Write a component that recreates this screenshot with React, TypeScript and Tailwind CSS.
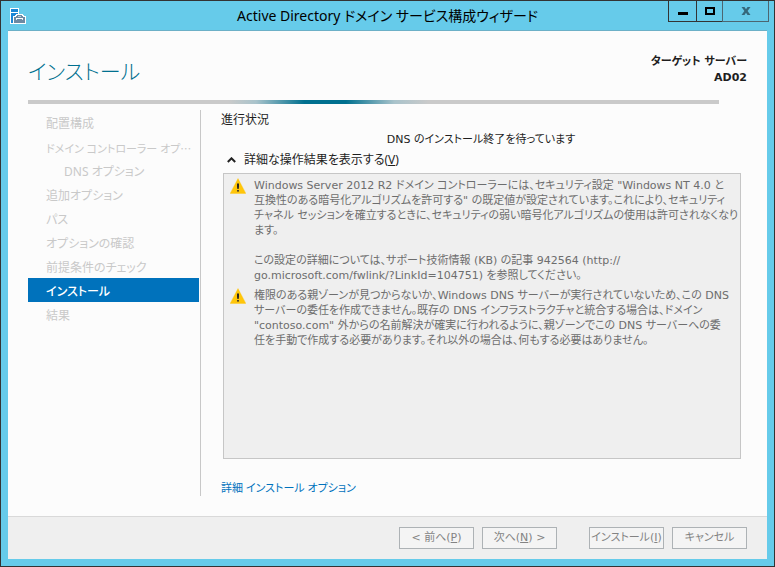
import type { ReactNode } from "react"

type Step = {
    id: string
    label: ReactNode
    nested?: boolean
    compact?: boolean
}

const steps: Step[] = [
    { id: "deployment", label: "配置構成" },
    {
        id: "dc-options",
        label: (
            <>
                ドメイン コントローラー オプ<span className="font-['Noto_Sans_CJK_JP',sans-serif]">…</span>
            </>
        ),
        compact: true,
    },
    { id: "dns", label: "DNS オプション", nested: true },
    { id: "additional", label: "追加オプション" },
    { id: "paths", label: "パス" },
    { id: "review", label: "オプションの確認" },
    { id: "prerequisites", label: "前提条件のチェック" },
    { id: "install", label: "インストール" },
    { id: "results", label: "結果" },
]

const currentStep = "install"

function AppIcon() {
    return (
        <svg width="16" height="16" viewBox="0 0 16 16" shapeRendering="crispEdges" aria-hidden="true">
            <path d="M0 0h9v6h4v1h1v1h2v8H0z" fill="#fff" />
            <rect x="1" y="1" width="7" height="3" fill="#1b87d6" />
            <path d="M1 5h7v1H6v1H5v1H3v7H1z" fill="#1b87d6" />
            <path d="M7 7h5v1h1v1h2v6H4V9h2V8h1z" fill="#6d8aa3" />
            <rect x="8" y="8" width="3" height="1" fill="#b9c9d6" />
            <rect x="6" y="10" width="7" height="1" fill="#fff" />
            <rect x="6" y="11" width="1" height="1" fill="#dfe7ed" />
            <rect x="12" y="11" width="1" height="1" fill="#dfe7ed" />
        </svg>
    )
}

function WarningIcon() {
    return (
        <svg width="16" height="16" viewBox="0 0 16 16" className="shrink-0" role="img" aria-label="警告">
            <path d="M8 0.6 15.8 15.4H0.2z" fill="#ffc60a" stroke="#ffc60a" strokeWidth="0.4" strokeLinejoin="round" />
            <path d="M7 5.500h2v3.500l-.4 2H7.4L7 9z" fill="#2b2620" />
            <rect x="7.200" y="12" width="1.600" height="1.600" fill="#2b2620" />
        </svg>
    )
}

function LogEntry({ children }: { children: ReactNode }) {
    return (
        <li className="flex items-start gap-2">
            <WarningIcon />
            <p className="whitespace-nowrap">{children}</p>
        </li>
    )
}

function WizardButton({ children }: { children: ReactNode }) {
    return (
        <button
            type="button"
            className="h-[22px] w-[75px] border border-[#adb2b5] bg-[#f4f4f4] text-center font-['DejaVu_Sans','Noto_Sans_CJK_JP',sans-serif] text-[11px] leading-5 whitespace-nowrap text-[#838383]"
        >
            {children}
        </button>
    )
}

export default function App() {
    return (
        <div
            lang="ja"
            className="flex min-h-screen flex-col border border-[#333] bg-[#66cbea] px-[7px] pb-[7px] font-['Noto_Sans','Noto_Sans_CJK_JP',sans-serif] text-xs text-[#1e1e1e] [font-feature-settings:'palt']"
        >
            {/* Title bar */}
            <header className="grid h-[29px] shrink-0 grid-cols-[1fr_auto_1fr] items-center">
                <div className="pl-0.5">
                    <AppIcon />
                </div>
                <h1 className="text-[14px] leading-6 whitespace-nowrap text-black">
                    Active Directory ドメイン サービス構成ウィザード
                </h1>
                <div className="-mr-0.5 flex self-start justify-self-end">
                    <button type="button" aria-label="最小化" className="flex h-[21px] w-7 items-center justify-center border-b border-l border-[#333]">
                        <svg width="10" height="10" viewBox="0 0 10 10" shapeRendering="crispEdges" aria-hidden="true">
                            <rect y="6" width="10" height="3" fill="#000" />
                        </svg>
                    </button>
                    <button type="button" aria-label="最大化" className="flex h-[21px] w-[26px] items-center justify-center border-b border-l border-[#333]">
                        <svg width="10" height="8" viewBox="0 0 10 8" shapeRendering="crispEdges" aria-hidden="true">
                            <rect x="1" y="1" width="8" height="6" fill="none" stroke="#000" strokeWidth="2" />
                        </svg>
                    </button>
                    <button type="button" aria-label="閉じる" className="flex h-[21px] w-[47px] items-center justify-center border-x border-b border-[#4c6671]">
                        <svg width="10" height="8" viewBox="0 0 10 8" aria-hidden="true">
                            <path d="M0.500 0h3L5 2.200 6.500 0h3L6.600 4 9.500 8h-3L5 5.800 3.500 8h-3l2.900-4z" fill="#35687b" />
                        </svg>
                    </button>
                </div>
            </header>

            <div className="flex flex-1 flex-col border-t border-[#6cb0c7] bg-[#fcfcfc]">
                <div className="flex h-[69px] shrink-0 items-start justify-between px-5 pt-5">
                    <h2 className="text-[21px] leading-10 font-light text-[#00708f]">インストール</h2>
                    <p className="pt-[3px] text-right font-['DejaVu_Sans','Noto_Sans_CJK_JP',sans-serif] text-[11px] leading-4 font-bold">
                        ターゲット サーバー
                        <br />
                        AD02
                    </p>
                </div>

                {/* Running progress marker */}
                <div
                    role="progressbar"
                    aria-label="進行状況"
                    className="mr-12 ml-5 h-1 shrink-0 bg-[linear-gradient(to_right,#cacaca_29%,#a9c3cb_33%,#00708f_40%,#00708f_46%,#a9c3cb_53%,#cacaca_58%)]"
                />

                <div className="flex flex-1 pt-1.5 pr-[26px] pb-5 pl-5">
                    <nav className="w-[173px] shrink-0 border-r border-[#c8c8c8] pr-px">
                        <ol>
                            {steps.map((step) => {
                                const active = step.id === currentStep
                                return (
                                    <li
                                        key={step.id}
                                        aria-current={active ? "step" : undefined}
                                        className={`h-6 pt-1 leading-5 whitespace-nowrap ${step.nested ? "pl-9" : "pl-[18px]"} ${
                                            step.compact ? "text-[11px]" : "text-xs"
                                        } ${active ? "bg-[#0072bc] font-medium text-white" : "text-[#c9c9c9]"}`}
                                    >
                                        {step.label}
                                    </li>
                                )
                            })}
                        </ol>
                    </nav>

                    <main className="flex min-w-0 flex-1 flex-col pl-5">
                        <h3 className="leading-5">進行状況</h3>
                        <p className="text-center font-['DejaVu_Sans','Noto_Sans_CJK_JP',sans-serif] text-[11px] leading-5">
                            DNS のインストール終了を待っています
                        </p>
                        <button type="button" aria-expanded="true" className="flex h-5 items-center gap-2 self-start pl-1.5">
                            <svg width="9" height="6" viewBox="0 0 9 6" aria-hidden="true">
                                <path d="M0.800 5 4.500 1.300 8.200 5" fill="none" stroke="#222" strokeWidth="2" />
                            </svg>
                            <span>
                                詳細な操作結果を表示する(<u>V</u>)
                            </span>
                        </button>

                        <ul className="mt-[3px] ml-0.5 flex flex-1 flex-col gap-[5px] border border-[#c6c6c6] bg-[#efefef] py-1 pl-1.5 font-['DejaVu_Sans','Noto_Sans_CJK_JP',sans-serif] text-[11px] leading-[15px] text-[#6d6d6d]">
                            <LogEntry>
                                Windows Server 2012 R2 ドメイン コントローラーには、セキュリティ設定 "Windows NT 4.0 と
                                <br />
                                互換性のある暗号化アルゴリズムを許可する" の既定値が設定されています。これにより、セキュリティ
                                <br />
                                チャネル セッションを確立するときに、セキュリティの弱い暗号化アルゴリズムの使用は許可されなくなり
                                <br />
                                ます。
                                <br />
                                <br />
                                この設定の詳細については、サポート技術情報 (KB) の記事 942564 (http://
                                <br />
                                go.microsoft.com/fwlink/?LinkId=104751) を参照してください。
                            </LogEntry>
                            <LogEntry>
                                権限のある親ゾーンが見つからないか、Windows DNS サーバーが実行されていないため、この DNS
                                <br />
                                サーバーの委任を作成できません。既存の DNS インフラストラクチャと統合する場合は、ドメイン
                                <br />
                                "contoso.com" 外からの名前解決が確実に行われるように、親ゾーンでこの DNS サーバーへの委
                                <br />
                                任を手動で作成する必要があります。それ以外の場合は、何もする必要はありません。
                            </LogEntry>
                        </ul>

                        <a href="#options" className="mt-[21px] self-start text-[11px] leading-4 text-[#0072bc]">
                            詳細 インストール オプション
                        </a>
                    </main>
                </div>

                <footer className="flex shrink-0 justify-end gap-2 border-t border-[#d9d9d9] bg-[#efefef] pt-2.5 pr-5 pb-2.5">
                    <WizardButton>
                        &lt; 前へ(<u>P</u>)
                    </WizardButton>
                    <WizardButton>
                        次へ(<u>N</u>) &gt;
                    </WizardButton>
                    <div className="ml-6 flex gap-2">
                        <WizardButton>
                            インストール(<u>I</u>)
                        </WizardButton>
                        <WizardButton>キャンセル</WizardButton>
                    </div>
                </footer>
            </div>
        </div>
    )
}
